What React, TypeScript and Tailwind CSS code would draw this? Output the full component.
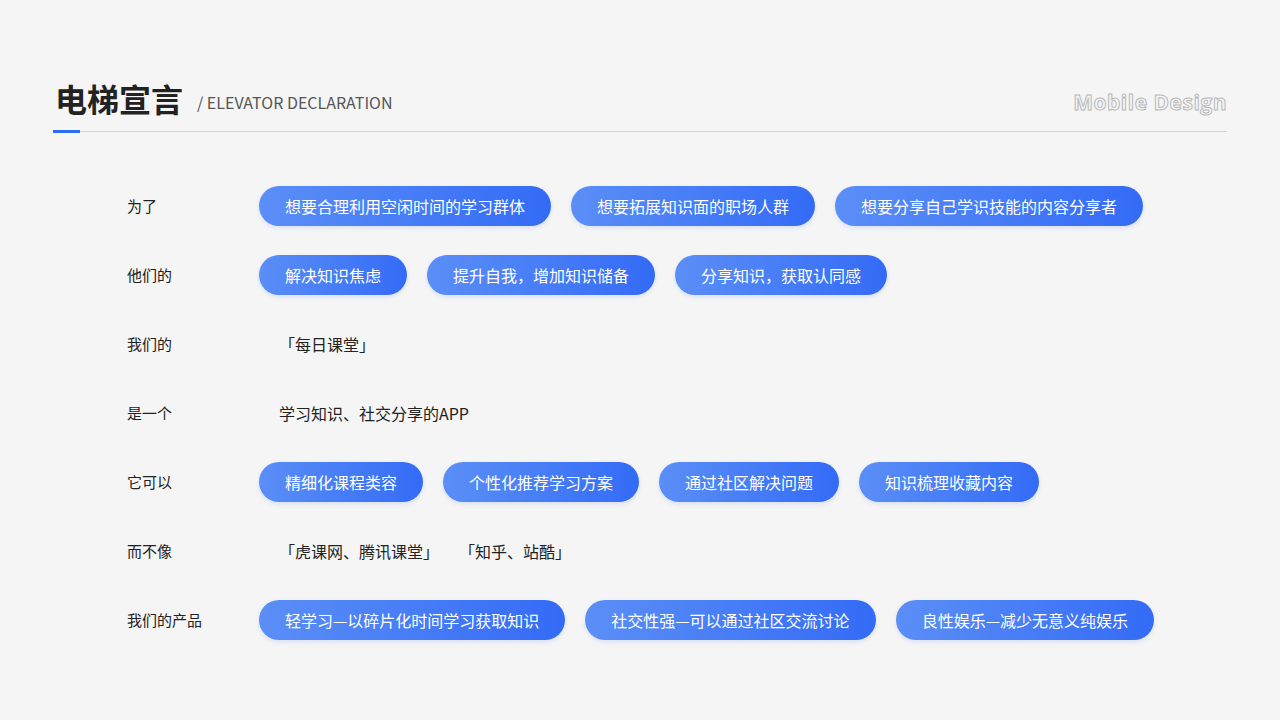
const rows: { label: string; pills?: string[]; text?: string[] }[] = [
  { label: "为了", pills: ["想要合理利用空闲时间的学习群体", "想要拓展知识面的职场人群", "想要分享自己学识技能的内容分享者"] },
  { label: "他们的", pills: ["解决知识焦虑", "提升自我，增加知识储备", "分享知识，获取认同感"] },
  { label: "我们的", text: ["「每日课堂」"] },
  { label: "是一个", text: ["学习知识、社交分享的APP"] },
  { label: "它可以", pills: ["精细化课程类容", "个性化推荐学习方案", "通过社区解决问题", "知识梳理收藏内容"] },
  { label: "而不像", text: ["「虎课网、腾讯课堂」", "「知乎、站酷」"] },
  { label: "我们的产品", pills: ["轻学习—以碎片化时间学习获取知识", "社交性强—可以通过社区交流讨论", "良性娱乐—减少无意义纯娱乐"] },
];

export default function App() {
  return (
    <div
      className="w-[1280px] h-[720px] bg-[#f5f5f5] px-[53px] pt-[74px]"
      style={{ fontFamily: '"Noto Sans CJK SC", "Noto Sans", sans-serif' }}
    >
      <div className="flex items-end justify-between h-[46px]">
        <div className="flex items-end gap-[14px] pl-[2px]">
          <h1 className="text-[32px] font-bold leading-[44px] text-[#222]">电梯宣言</h1>
          <span className="text-[16px] text-[#555] leading-[36px]">/ ELEVATOR DECLARATION</span>
        </div>
        <span
          className="text-[21px] font-bold tracking-[0.5px] text-transparent leading-[36px] [-webkit-text-stroke:1px_#b8b8b8]"
          style={{ fontFamily: '"Open Sans", sans-serif' }}
        >
          Mobile Design
        </span>
      </div>
      <div className="relative mt-[11px] h-[1px] bg-[#d4d4d4]">
        <div className="absolute left-0 top-[-1px] h-[3px] w-[27px] bg-[#2a6df4]" />
      </div>
      <div className="mt-[54px] flex flex-col gap-[29px] pl-[74px]">
        {rows.map((r) => (
          <div key={r.label} className="flex items-center h-[40px]">
            <div className="w-[132px] text-[15px] text-[#222]">{r.label}</div>
            {r.pills ? (
              <div className="flex gap-[20px]">
                {r.pills.map((p) => (
                  <div
                    key={p}
                    className="h-[40px] flex items-center px-[26px] rounded-full text-white text-[16px] bg-gradient-to-r from-[#5b8ef6] to-[#346bf6] shadow-[0_2px_4px_rgba(52,107,246,0.15)]"
                  >
                    {p}
                  </div>
                ))}
              </div>
            ) : (
              <div className="flex gap-[20px] pl-[20px] text-[16px] text-[#222]">
                {r.text!.map((t) => (
                  <span key={t}>{t}</span>
                ))}
              </div>
            )}
          </div>
        ))}
      </div>
    </div>
  );
}
